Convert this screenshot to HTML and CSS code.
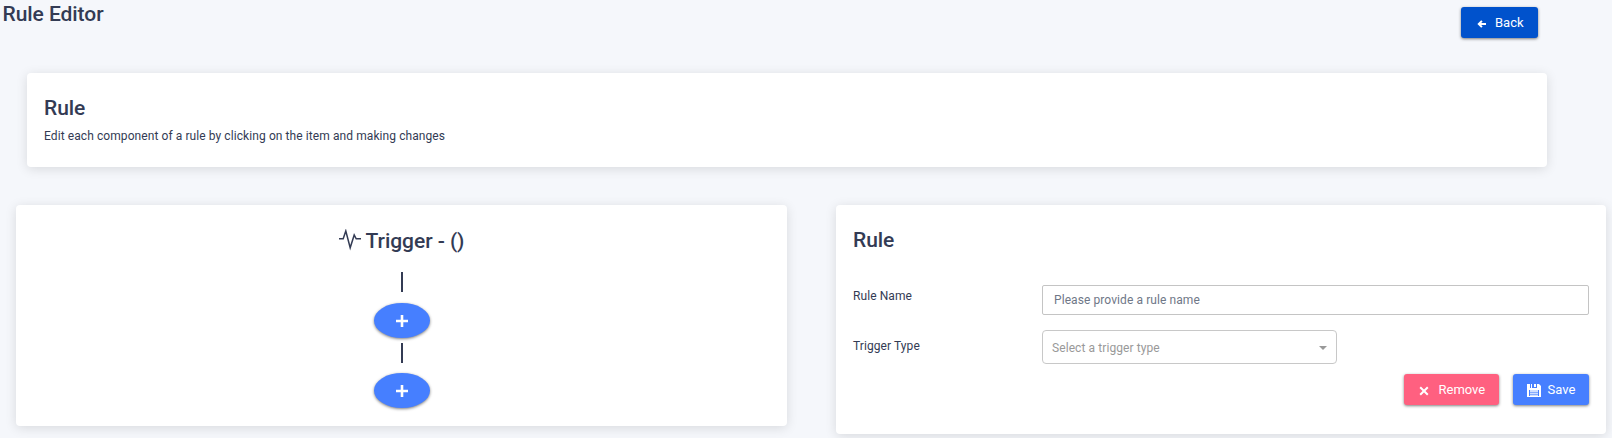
FILE: index.html
```html
<!DOCTYPE html>
<html lang="en">
<head>
<meta charset="utf-8">
<title>Rule Editor</title>
<link rel="stylesheet" href="styles.css">
</head>
<body>
<header class="page-header">
  <h1 class="title">Rule Editor</h1>
  <button class="btn btn-back"><svg class="ico" width="10" height="10" viewBox="0 0 10 10"><path d="M9 5H2M4.9 1.9L1.8 5l3.1 3.1" fill="none" stroke="currentColor" stroke-width="2"/></svg><span>Back</span></button>
</header>
<section class="card intro">
  <h2 class="title">Rule</h2>
  <p class="intro-text">Edit each component of a rule by clicking on the item and making changes</p>
</section>
<main class="columns">
  <section class="card flow">
    <h2 class="title flow-title"><svg width="22" height="22" viewBox="0 0 22 22"><path d="M0 9.8H4.2L6.8 2L11.2 18.8L15.2 6L17.2 9.8H22" fill="none" stroke="currentColor" stroke-width="1.5"/></svg><span>Trigger - ()</span></h2>
    <div class="connector"></div>
    <button class="add" aria-label="Add condition"><svg width="12" height="12" viewBox="0 0 12 12"><path d="M6 0v12M0 6h12" stroke="currentColor" stroke-width="2.6"/></svg></button>
    <div class="connector connector-next"></div>
    <button class="add" aria-label="Add action"><svg width="12" height="12" viewBox="0 0 12 12"><path d="M6 0v12M0 6h12" stroke="currentColor" stroke-width="2.6"/></svg></button>
  </section>
  <section class="card form">
    <h2 class="title">Rule</h2>
    <div class="row row-name">
      <label class="label" for="name">Rule Name</label>
      <input class="input" id="name" placeholder="Please provide a rule name">
    </div>
    <div class="row row-type">
      <span class="label">Trigger Type</span>
      <div class="select"><span>Select a trigger type</span><i class="caret"></i></div>
    </div>
    <div class="actions">
      <button class="btn btn-remove"><svg class="ico" width="10" height="10" viewBox="0 0 10 10"><path d="M1.2 1.2l7.6 7.6M8.8 1.2L1.2 8.8" stroke="currentColor" stroke-width="2"/></svg><span>Remove</span></button>
      <button class="btn btn-save"><svg class="ico" width="14" height="14" viewBox="0 0 14 14"><path fill="currentColor" fill-rule="evenodd" d="M0 0h3v4h7V0h2l2 2v11H0zM2 6v6h10V6z"/><path fill="currentColor" d="M7 0h2v3H7zM4 0h1v4H4z"/><path fill="currentColor" fill-opacity=".75" d="M3 6h8v6H3z"/><path d="M3 8.5h8M3 10.5h8" stroke="#467fff" stroke-opacity=".55"/></svg><span>Save</span></button>
    </div>
  </section>
</main>
</body>
</html>
```
FILE: styles.css
```css
* { box-sizing: border-box; }
body {
  margin: 0;
  height: 438px;
  overflow: hidden;
  background: #f5f7fb;
  color: #333b54;
  font: 400 12px/18px Roboto, sans-serif;
  letter-spacing: 0.085px;
}
.title {
  margin: 0;
  font-size: 21px;
  line-height: 24px;
  font-weight: 500;
  letter-spacing: -0.06px;
}
.page-header {
  display: flex;
  justify-content: space-between;
  align-items: flex-start;
  height: 73px;
  padding: 2px 74px 0 2.5px;
}
.card {
  background: #fff;
  border-radius: 4px;
  box-shadow: 0 2px 12px rgba(0, 0, 0, 0.12);
}
.intro {
  width: 1520px;
  height: 94px;
  margin-left: 27px;
  padding: 23px 17px 0;
}
.intro-text { margin: 7px 0 0; }
.columns {
  display: grid;
  grid-template-columns: 771px 770px;
  column-gap: 49px;
  align-items: start;
  margin: 38px 0 0 16px;
}
.flow {
  display: flex;
  flex-direction: column;
  align-items: center;
  height: 221px;
  padding-top: 24px;
}
.flow-title {
  display: flex;
  align-items: flex-start;
  gap: 5px;
}
.connector {
  width: 2px;
  height: 20px;
  margin: 19px 0 11px;
  background: #333b54;
}
.connector-next { margin: 5px 0 10px; }
.add {
  display: flex;
  align-items: center;
  justify-content: center;
  width: 56px;
  height: 35px;
  padding: 1px 0 0;
  border: 0;
  border-radius: 50%;
  background: #467fff;
  color: #fff;
  box-shadow: 0 1px 3px rgba(0, 0, 0, 0.5);
}
.form {
  height: 229px;
  padding: 23px 17px 0;
}
.row {
  display: grid;
  grid-template-columns: 189px 1fr;
}
.row-name { margin-top: 33px; }
.row-type { margin-top: 15px; }
.label { padding-top: 2px; }
.row-type .label { padding-top: 7px; }
.input {
  width: 100%;
  height: 30px;
  padding: 0 11px;
  border: 1px solid #c4c4c4;
  border-radius: 2px;
  font: inherit;
  letter-spacing: inherit;
}
.input::placeholder { color: #6f7787; }
.select {
  display: flex;
  align-items: center;
  justify-content: space-between;
  width: 295px;
  height: 34px;
  padding: 2px 9px 0;
  border: 1px solid #c8c8c8;
  border-radius: 4px;
  color: #999;
}
.caret {
  border: 4px solid transparent;
  border-top-color: #999;
  border-bottom: 0;
}
.actions {
  display: flex;
  justify-content: flex-end;
  gap: 14px;
  margin-top: 10px;
}
.btn {
  display: flex;
  align-items: center;
  height: 31px;
  border: 0;
  border-radius: 3px;
  color: #fff;
  font: 400 13px/18px Roboto, sans-serif;
  box-shadow: 0 1px 3px rgba(0, 0, 0, 0.5);
}
.ico { flex: none; position: relative; top: 1px; }
.btn-back {
  width: 77px;
  margin-top: 5px;
  padding: 0 0 0 16px;
  gap: 8px;
  background: #0052cc;
}
.btn-remove {
  width: 95px;
  padding: 0 0 0 15px;
  gap: 9.5px;
  background: #ff6080;
}
.btn-save {
  width: 76px;
  padding: 0 0 0 14px;
  gap: 6.5px;
  background: #467fff;
}
```
